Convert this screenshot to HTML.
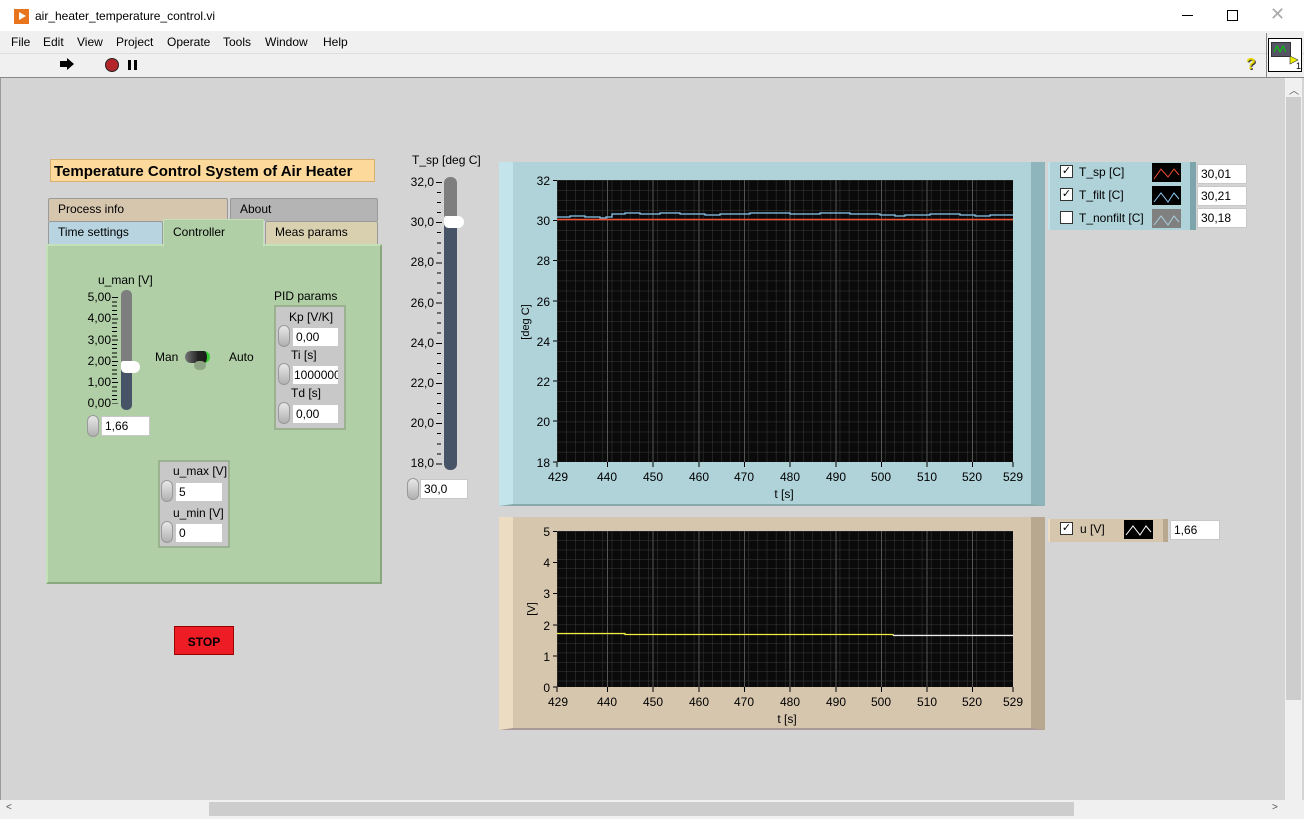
<!DOCTYPE html>
<html><head><meta charset="utf-8"><style>
*{box-sizing:border-box;margin:0;padding:0}
body{width:1304px;height:819px;position:relative;overflow:hidden;background:#d4d4d4;font-family:"Liberation Sans",sans-serif;font-size:12px;color:#000}
.a{position:absolute}
.num{position:absolute;background:#fff;border:1px solid #c8c8c8;font-size:12px;padding:2px 0 0 3px;height:20px;overflow:hidden;white-space:nowrap}
.spin{position:absolute;width:12px;height:22px;border-radius:6px;background:linear-gradient(#e8e8e8,#b0b0b0);border:1px solid #999}
.tab{position:absolute;border:1px solid #999;border-bottom:none;padding:3px 9px;font-size:12px;border-radius:2px 2px 0 0}
</style></head><body>
<!-- title bar -->
<div class="a" style="left:0;top:0;width:1304px;height:31px;background:#fff"></div>
<div class="a" style="left:14px;top:9px;width:15px;height:15px;background:#e8741e"></div>
<div class="a" style="left:19px;top:12px;width:0;height:0;border-left:7px solid #fff;border-top:4.5px solid transparent;border-bottom:4.5px solid transparent"></div>
<div class="a" style="left:35px;top:9px;font-size:12px">air_heater_temperature_control.vi</div>
<div class="a" style="left:1182px;top:15px;width:11px;height:1px;background:#000"></div>
<div class="a" style="left:1227px;top:10px;width:11px;height:11px;border:1px solid #000"></div>
<div class="a" style="left:1270px;top:4px;font-size:18px;color:#aaa">✕</div>
<!-- menu -->
<div class="a" style="left:0;top:31px;width:1304px;height:22px;background:#f0f0f0"></div>
<div class="a" style="left:11px;top:35px">File</div>
<div class="a" style="left:43px;top:35px">Edit</div>
<div class="a" style="left:77px;top:35px">View</div>
<div class="a" style="left:116px;top:35px">Project</div>
<div class="a" style="left:167px;top:35px">Operate</div>
<div class="a" style="left:223px;top:35px">Tools</div>
<div class="a" style="left:265px;top:35px">Window</div>
<div class="a" style="left:323px;top:35px">Help</div>
<!-- toolbar -->
<div class="a" style="left:0;top:53px;width:1304px;height:1px;background:#ddd"></div>
<div class="a" style="left:0;top:54px;width:1304px;height:24px;background:#f0f0f0;border-bottom:1px solid #888"></div>
<div class="a" style="left:1266px;top:33px;width:1px;height:45px;background:#888"></div>
<div class="a" style="left:60px;top:61px;width:8px;height:6px;background:#000"></div>
<div class="a" style="left:67px;top:58px;border-left:7px solid #000;border-top:6px solid transparent;border-bottom:6px solid transparent"></div>
<div class="a" style="left:105px;top:58px;width:14px;height:14px;border-radius:50%;background:#b3262a;border:1px solid #222"></div>
<div class="a" style="left:128px;top:60px;width:3px;height:10px;background:#000"></div>
<div class="a" style="left:134px;top:60px;width:3px;height:10px;background:#000"></div>
<div class="a" style="left:1246px;top:56px;font-size:16px;font-weight:bold;color:#e6d400;text-shadow:1px 1px 0 #333">?</div>
<div class="a" style="left:1268px;top:38px;width:34px;height:34px;background:#fff;border:1px solid #000"></div>
<div class="a" style="left:1271px;top:42px;width:20px;height:15px;background:#556;border:1px solid #333"></div>
<svg class="a" style="left:1271px;top:42px" width="30" height="28"><path d="M3 10 L6 4 L9 10 L12 4 L15 10" stroke="#0c0" fill="none"/><path d="M19 14 L27 18 L19 22Z" fill="#ee0" stroke="#333" stroke-width=".6"/><text x="25" y="27" font-size="9" font-family="Liberation Sans">1</text></svg>
<!-- scrollbars -->
<div class="a" style="left:1285px;top:78px;width:17px;height:722px;background:#f0f0f0"></div>
<div class="a" style="left:1286px;top:97px;width:15px;height:603px;background:#cdcdcd"></div>
<div class="a" style="left:1289px;top:82px;font-size:10px;color:#555">︿</div>
<div class="a" style="left:0;top:800px;width:1304px;height:19px;background:#f0f0f0"></div>
<div class="a" style="left:209px;top:802px;width:865px;height:14px;background:#cdcdcd"></div>
<div class="a" style="left:6px;top:802px;font-size:10px;color:#555">&lt;</div>
<div class="a" style="left:1272px;top:802px;font-size:10px;color:#555">&gt;</div>
<div class="a" style="left:0;top:78px;width:1px;height:722px;background:#999"></div>

<!-- title label -->
<div class="a" style="left:50px;top:159px;width:325px;height:23px;background:#fdd99b;border:1px solid #d8b070;font-weight:bold;font-size:15px;padding:3px 0 0 3px;white-space:nowrap">Temperature Control System of Air Heater</div>
<!-- tabs -->
<div class="tab" style="left:48px;top:198px;width:180px;height:23px;background:#d6c6ae">Process info</div>
<div class="tab" style="left:230px;top:198px;width:148px;height:23px;background:#b4b4b4">About</div>
<div class="tab" style="left:48px;top:221px;width:115px;height:24px;background:#b8d4e0">Time settings</div>
<div class="tab" style="left:265px;top:221px;width:113px;height:24px;background:#d9d0b0">Meas params</div>
<div class="a" style="left:46px;top:244px;width:336px;height:340px;background:#b0cfa6;border:2px solid;border-color:#c4e0b8 #8aa880 #8aa880 #c4e0b8"></div>
<div class="tab" style="left:163px;top:219px;width:101px;height:28px;background:#b0cfa6;border-color:#c4e0b8;padding-top:5px">Controller</div>

<!-- u_man -->
<div class="a" style="left:98px;top:273px">u_man [V]</div>
<div class="a" style="left:121px;top:290px;width:11px;height:120px;border-radius:5px;background:linear-gradient(#7e7e7e 0 63%,#475366 63%)"></div>
<div class="a" style="left:121px;top:361px;width:19px;height:12px;background:#fff;border-radius:3px 8px 8px 6px"></div>
<div class="a" style="left:81px;top:287px;text-align:right;width:30px;line-height:21.3px;font-size:12px">5,00<br>4,00<br>3,00<br>2,00<br>1,00<br>0,00</div>
<div class="a" style="left:112px;top:297px;width:5px;height:107px;background:repeating-linear-gradient(#000 0 1px,transparent 1px 4.26px)"></div>
<div class="a" style="left:112px;top:297px;width:6px;height:107px;background:repeating-linear-gradient(#000 0 1px,transparent 1px 21.3px)"></div>
<div class="spin" style="left:87px;top:415px"></div>
<div class="num" style="left:101px;top:416px;width:49px">1,66</div>
<div class="a" style="left:155px;top:350px">Man</div>
<div class="a" style="left:229px;top:350px">Auto</div>
<div class="a" style="left:185px;top:351px;width:25px;height:12px;border-radius:6px;background:linear-gradient(90deg,#777,#222 60%,#1a1a1a);border-right:3px solid #3c3"></div>
<div class="a" style="left:194px;top:361px;width:12px;height:9px;border-radius:5px;background:#8da585"></div>
<!-- PID -->
<div class="a" style="left:274px;top:289px">PID params</div>
<div class="a" style="left:274px;top:305px;width:72px;height:125px;background:#c8c8c8;border:2px solid #9ab290"></div>
<div class="a" style="left:289px;top:310px">Kp [V/K]</div>
<div class="spin" style="left:278px;top:325px"></div><div class="num" style="left:292px;top:327px;width:47px">0,00</div>
<div class="a" style="left:291px;top:348px">Ti [s]</div>
<div class="spin" style="left:278px;top:363px"></div><div class="num" style="left:292px;top:365px;width:47px;padding-left:1px">1000000</div>
<div class="a" style="left:291px;top:386px">Td [s]</div>
<div class="spin" style="left:278px;top:402px"></div><div class="num" style="left:292px;top:404px;width:47px">0,00</div>
<!-- u_max -->
<div class="a" style="left:158px;top:460px;width:72px;height:88px;background:#c8c8c8;border:2px solid #9ab290"></div>
<div class="a" style="left:173px;top:464px">u_max [V]</div>
<div class="spin" style="left:161px;top:480px"></div><div class="num" style="left:175px;top:482px;width:48px">5</div>
<div class="a" style="left:173px;top:506px">u_min [V]</div>
<div class="spin" style="left:161px;top:521px"></div><div class="num" style="left:175px;top:523px;width:48px">0</div>
<!-- STOP -->
<div class="a" style="left:174px;top:626px;width:60px;height:29px;background:#ee1c24;border:1px solid #900;font-weight:bold;text-align:center;padding-top:8px">STOP</div>

<!-- T_sp slider -->
<div class="a" style="left:412px;top:153px">T_sp [deg C]</div>
<div class="a" style="left:444px;top:177px;width:13px;height:293px;border-radius:6px;background:linear-gradient(#7e7e7e 0 16%,#475366 16%)"></div>
<div class="a" style="left:444px;top:216px;width:20px;height:12px;background:#fff;border-radius:3px 8px 8px 6px"></div>
<div class="a" style="left:400px;top:162px;width:34px;text-align:right;line-height:40.2px">32,0<br>30,0<br>28,0<br>26,0<br>24,0<br>22,0<br>20,0<br>18,0</div>
<div class="a" style="left:437px;top:182px;width:4px;height:282px;background:repeating-linear-gradient(#000 0 1px,transparent 1px 10.05px)"></div>
<div class="a" style="left:436px;top:182px;width:6px;height:283px;background:repeating-linear-gradient(#000 0 1px,transparent 1px 40.2px)"></div>
<div class="spin" style="left:407px;top:478px"></div><div class="num" style="left:420px;top:479px;width:48px">30,0</div>

<!-- chart frames -->
<div class="a" style="left:499px;top:162px;width:546px;height:344px;background:#b0d2d9;border-left:14px solid #c4e4ec;border-right:14px solid #8eb4bc;border-bottom:2px solid #8aa"></div>
<div class="a" style="left:499px;top:517px;width:546px;height:213px;background:#d6c6ae;border-left:14px solid #ecdcc2;border-right:14px solid #b8a890;border-bottom:2px solid #a99"></div>
<!-- legend 1 -->
<div class="a" style="left:1048px;top:162px;width:148px;height:68px;background:#b0d2d9;border-right:6px solid #7ea4ac;border-left:2px solid #c4e4ec"></div>
<div class="a" style="left:1060px;top:165px;width:13px;height:13px;background:#fff;border:1px solid #333;font-size:11px;line-height:11px;text-align:center">✓</div>
<div class="a" style="left:1060px;top:188px;width:13px;height:13px;background:#fff;border:1px solid #333;font-size:11px;line-height:11px;text-align:center">✓</div>
<div class="a" style="left:1060px;top:211px;width:13px;height:13px;background:#fff;border:1px solid #333"></div>
<div class="a" style="left:1079px;top:165px">T_sp [C]</div>
<div class="a" style="left:1079px;top:188px">T_filt [C]</div>
<div class="a" style="left:1079px;top:211px">T_nonfilt [C]</div>
<svg class="a" style="left:1152px;top:163px" width="30" height="66"><rect width="29" height="19" fill="#000"/><path d="M2 16L9 6 16 14 22 6 27 12" stroke="#f25030" fill="none"/><rect y="23" width="29" height="19" fill="#000"/><path d="M2 39L9 30 16 39 22 30 27 36" stroke="#8cc8f0" fill="none"/><rect y="46" width="29" height="19" fill="#808080"/><path d="M2 62L9 53 16 62 22 53 27 59" stroke="#a8d0e0" fill="none"/></svg>
<div class="num" style="left:1197px;top:164px;width:50px">30,01</div>
<div class="num" style="left:1197px;top:186px;width:50px">30,21</div>
<div class="num" style="left:1197px;top:208px;width:50px">30,18</div>
<!-- legend 2 -->
<div class="a" style="left:1048px;top:519px;width:120px;height:23px;background:#d6c6ae;border-right:5px solid #b8a890;border-left:2px solid #ecdcc2"></div>
<div class="a" style="left:1060px;top:522px;width:13px;height:13px;background:#fff;border:1px solid #333;font-size:11px;line-height:11px;text-align:center">✓</div>
<div class="a" style="left:1080px;top:522px">u [V]</div>
<svg class="a" style="left:1124px;top:520px" width="30" height="20"><rect width="29" height="19" fill="#000"/><path d="M2 15L9 6 16 15 22 6 27 12" stroke="#fff" fill="none"/></svg>
<div class="num" style="left:1170px;top:520px;width:50px">1,66</div>

<svg class="a" style="left:0;top:0" width="1304" height="819" font-family="Liberation Sans" font-size="12">
<defs>
<pattern id="g1" x="557" y="180" width="9.12" height="10.07" patternUnits="userSpaceOnUse"><path d="M0 0V10.07M0 0H9.12" stroke="#3a3a3a" stroke-width="1"/></pattern>
<pattern id="g2" x="557" y="531" width="9.12" height="9.36" patternUnits="userSpaceOnUse"><path d="M0 0V9.36M0 0H9.12" stroke="#3a3a3a" stroke-width="1"/></pattern>
</defs>
<rect x="557" y="180" width="456" height="282" fill="#0a0a0a"/>
<rect x="557" y="180" width="456" height="282" fill="url(#g1)"/>
<rect x="557" y="531" width="456" height="156" fill="#0a0a0a"/>
<rect x="557" y="531" width="456" height="156" fill="url(#g2)"/>
<g stroke="#555">
<line x1="607.5" y1="180" x2="607.5" y2="462"/><line x1="653" y1="180" x2="653" y2="462"/><line x1="699" y1="180" x2="699" y2="462"/><line x1="744.5" y1="180" x2="744.5" y2="462"/><line x1="790" y1="180" x2="790" y2="462"/><line x1="836" y1="180" x2="836" y2="462"/><line x1="881.5" y1="180" x2="881.5" y2="462"/><line x1="927" y1="180" x2="927" y2="462"/><line x1="972.5" y1="180" x2="972.5" y2="462"/>
<line x1="607.5" y1="531" x2="607.5" y2="687"/><line x1="653" y1="531" x2="653" y2="687"/><line x1="699" y1="531" x2="699" y2="687"/><line x1="744.5" y1="531" x2="744.5" y2="687"/><line x1="790" y1="531" x2="790" y2="687"/><line x1="836" y1="531" x2="836" y2="687"/><line x1="881.5" y1="531" x2="881.5" y2="687"/><line x1="927" y1="531" x2="927" y2="687"/><line x1="972.5" y1="531" x2="972.5" y2="687"/>
</g>
<path d="M557 217H570V216H585V217H600V218H606V217H612V214H625V213H640V214H660V213H680V214H705V215H720V214H750V213H790V214H820V213H850V214H880V215H895V216H905V215H930V214H960V215H975V216H990V215H1013" stroke="#8cc8f0" fill="none" stroke-width="1.3"/>
<line x1="557" y1="219.5" x2="1013" y2="219.5" stroke="#f25030" stroke-width="1.5"/>
<path d="M557 633.5H625V634.5H893V635.5" stroke="#f0f040" fill="none" stroke-width="1.2"/>
<path d="M893 635.5H1013" stroke="#eee" fill="none" stroke-width="1.2"/>
<g text-anchor="end">
<text x="550" y="185">32</text><text x="550" y="225">30</text><text x="550" y="265">28</text><text x="550" y="306">26</text><text x="550" y="346">24</text><text x="550" y="386">22</text><text x="550" y="426">20</text><text x="550" y="467">18</text>
<text x="550" y="536">5</text><text x="550" y="567">4</text><text x="550" y="598">3</text><text x="550" y="630">2</text><text x="550" y="661">1</text><text x="550" y="692">0</text>
</g>
<path d="M553 180.5h4M553 220.5h4M553 260.5h4M553 301h4M553 341h4M553 381h4M553 421h4M553 462h4M553 531.5h4M553 562.5h4M553 593.5h4M553 625h4M553 656h4M553 687h4" stroke="#000"/>
<path d="M557 462v5M607.5 462v5M653 462v5M699 462v5M744.5 462v5M790 462v5M836 462v5M881.5 462v5M927 462v5M972.5 462v5M1013 462v5M557 687v5M607.5 687v5M653 687v5M699 687v5M744.5 687v5M790 687v5M836 687v5M881.5 687v5M927 687v5M972.5 687v5M1013 687v5" stroke="#000"/>
<g text-anchor="middle">
<text x="558" y="481">429</text><text x="607" y="481">440</text><text x="653" y="481">450</text><text x="699" y="481">460</text><text x="744" y="481">470</text><text x="790" y="481">480</text><text x="836" y="481">490</text><text x="881" y="481">500</text><text x="927" y="481">510</text><text x="972" y="481">520</text><text x="1013" y="481">529</text>
<text x="784" y="498">t [s]</text>
<text x="558" y="706">429</text><text x="607" y="706">440</text><text x="653" y="706">450</text><text x="699" y="706">460</text><text x="744" y="706">470</text><text x="790" y="706">480</text><text x="836" y="706">490</text><text x="881" y="706">500</text><text x="927" y="706">510</text><text x="972" y="706">520</text><text x="1013" y="706">529</text>
<text x="787" y="723">t [s]</text>
</g>
<text transform="translate(529,322) rotate(-90)" text-anchor="middle" font-size="11">[deg C]</text>
<text transform="translate(535,609) rotate(-90)" text-anchor="middle" font-size="11">[V]</text>
</svg>
</body></html>
